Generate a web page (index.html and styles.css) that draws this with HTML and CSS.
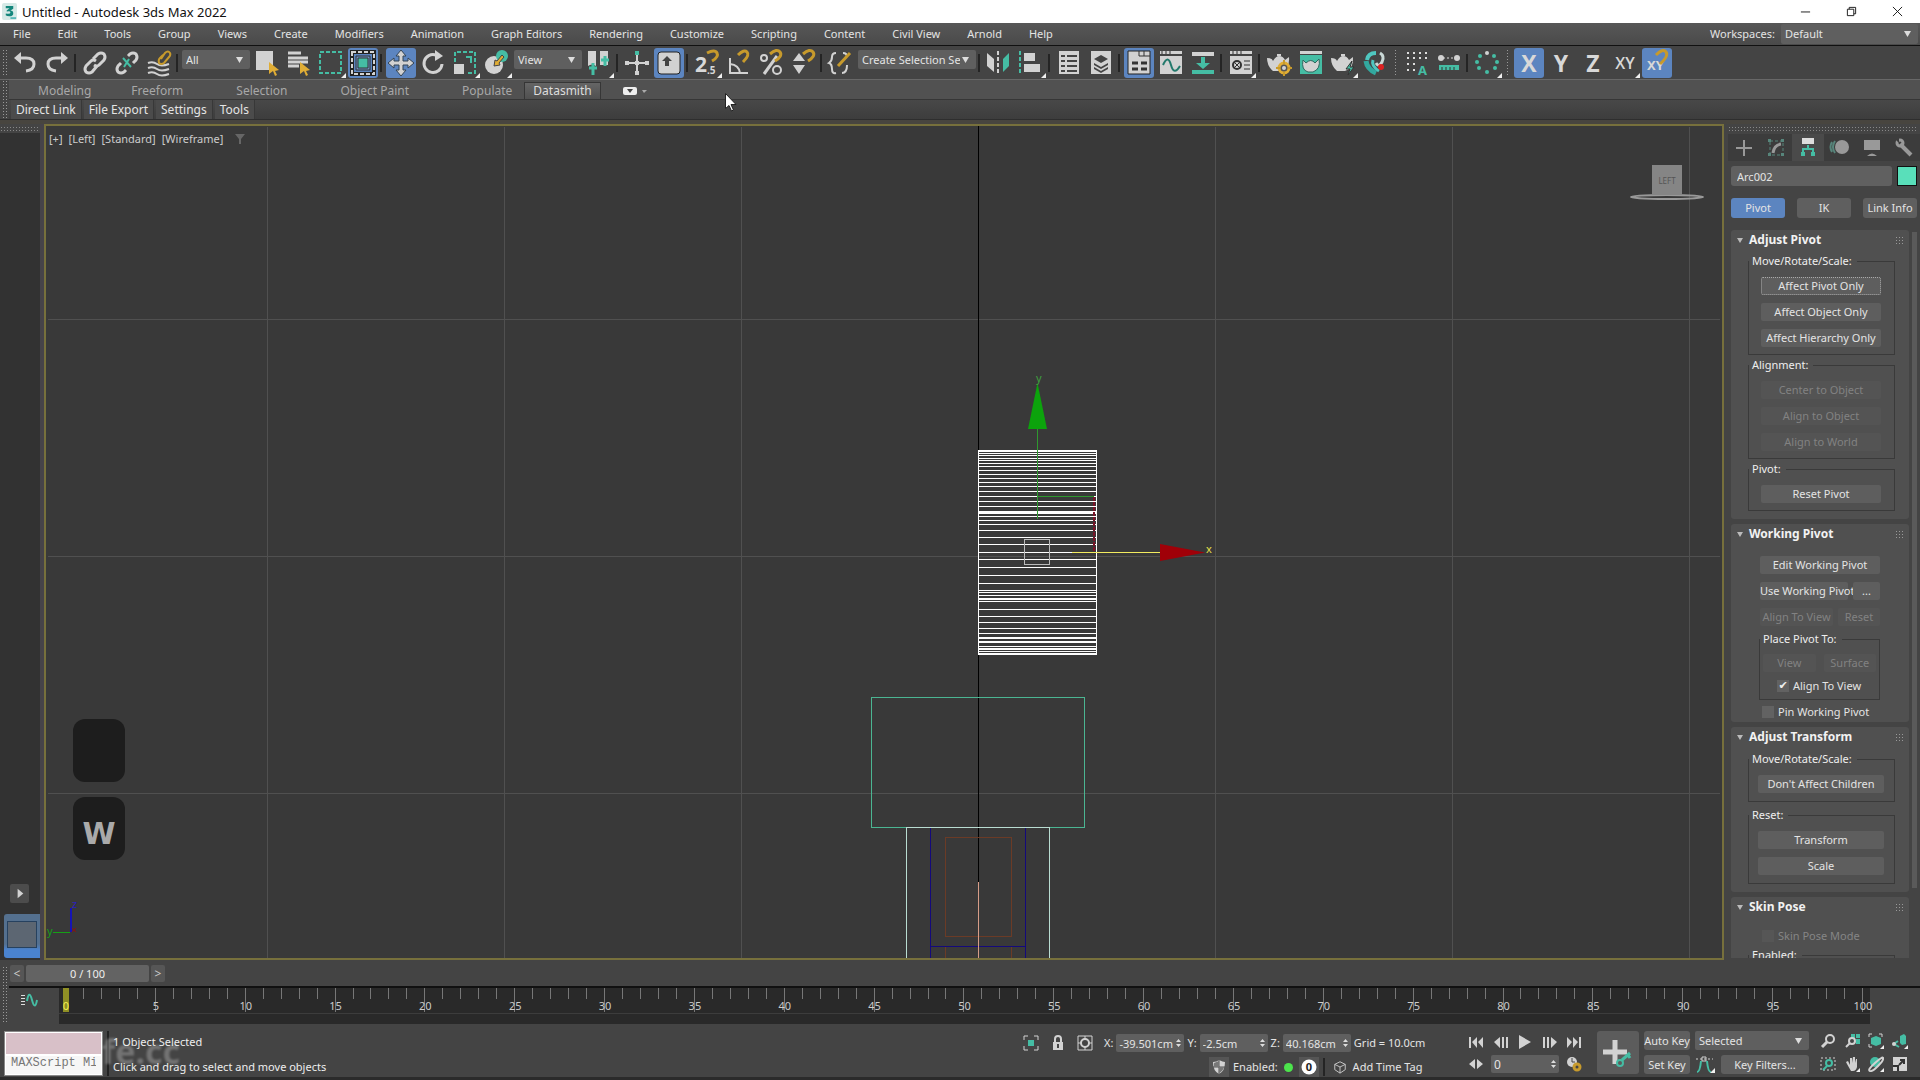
FILE: index.html
```html
<!DOCTYPE html>
<html lang="en">
<head>
<meta charset="utf-8">
<title>Untitled - Autodesk 3ds Max 2022</title>
<link rel="stylesheet" href="styles.css">
</head>
<body>
<div class="app">
  <header class="titlebar">
    <svg class="logo" viewBox="0 0 16 18"><rect width="16" height="18" rx="2" fill="#d5e9e6"/><path d="M4 3h8v3L9 8q3 0 3 3t-4 3q-3 0-4-1v-2q5 1 5-1t-4-1V8l3-2.500H4z" fill="#14867c"/><path d="M9 16h6" stroke="#3aa" stroke-width="1.500"/></svg>
    <h1>Untitled - Autodesk 3ds Max 2022</h1>
    <div class="winbtns">
      <button aria-label="Minimize"><svg viewBox="0 0 12 12"><path d="M1 6.500h10"/></svg></button>
      <button aria-label="Restore"><svg viewBox="0 0 12 12"><path d="M1.500 3.500h7v7h-7zM3.500 3.500v-2h7v7h-2"/></svg></button>
      <button aria-label="Close"><svg viewBox="0 0 12 12"><path d="M1 1l10 10M11 1L1 11"/></svg></button>
    </div>
  </header>

  <nav class="menubar">
    <a href="#">File</a><a href="#">Edit</a><a href="#">Tools</a><a href="#">Group</a><a href="#">Views</a><a href="#">Create</a><a href="#">Modifiers</a><a href="#">Animation</a><a href="#">Graph Editors</a><a href="#">Rendering</a><a href="#">Customize</a><a href="#">Scripting</a><a href="#">Content</a><a href="#">Civil View</a><a href="#">Arnold</a><a href="#">Help</a>
    <div class="workspaces"><label for="ws">Workspaces:</label><select id="ws" class="drop"><option>Default</option></select></div>
  </nav>

  <div class="toolbar">
    <i class="grip"></i>
    <button class="tool" aria-label="Undo"><svg viewBox="0 0 30 30"><path d="M9 10h7q8 0 8 6t-8 7" class="l w3"/><path d="M11 4v12L4 10z" class="f"/></svg></button>
    <button class="tool" aria-label="Redo"><svg viewBox="0 0 30 30"><path d="M21 10h-7q-8 0-8 6t8 7" class="l w3"/><path d="M19 4v12l7-6z" class="f"/></svg></button>
    <i class="sep"></i>
    <button class="tool" aria-label="Link"><svg viewBox="0 0 30 30"><g class="l w3"><path d="M13 11l5-5q3-2 6 0 2 3 0 6l-5 5q-2 2-5 0"/><path d="M17 18l-5 6q-3 2-6 0-2-3 0-6l5-5q2-2 5 0"/></g></svg></button>
    <button class="tool" aria-label="Unlink"><svg viewBox="0 0 30 30"><g class="l w3"><path d="M16 8l2-2q3-2 6 0 2 3 0 6l-3 3"/><path d="M14 22l-2 2q-3 2-6 0-2-3 0-6l3-3"/></g><path d="M11 10l8 9M17 11l-5 8" class="t w2"/></svg></button>
    <button class="tool" aria-label="Bind to Space Warp"><svg viewBox="0 0 30 30"><path d="M4 15q5-2 9 1t12 0M4 20q5-2 9 1t12 0M4 25q5-2 9 1t12 0" class="l w2"/><path d="M17 11l4-6q3-3 5 0 1 2-1 4l-5 6q-3 2-5 0-1-3 1-5l3-3" class="y w2"/></svg></button>
    <i class="sep"></i>
    <select class="drop tdrop" aria-label="Selection filter"><option>All</option></select>
    <button class="tool" aria-label="Select Object"><svg viewBox="0 0 30 30"><path d="M4 3h17v19H4z" class="f"/><path d="M17 14l10 8-4 1 2 4-2 1-2-5-4 3z" class="fy"/></svg></button>
    <button class="tool" aria-label="Select by Name"><svg viewBox="0 0 30 30"><path d="M4 5h13M4 10h20M4 14h20M4 18h11" class="l w3"/><path d="M16 14l10 8-4 1 2 4-2 1-2-5-4 3z" class="fy"/></svg></button>
    <button class="tool" aria-label="Rectangular Region"><svg viewBox="0 0 30 30"><path d="M4 4h21v21H4z" class="t w2" stroke-dasharray="4 2"/><path d="M30 25v5h-5z" class="fw"/></svg></button>
    <button class="tool on" aria-label="Window Crossing"><svg viewBox="0 0 30 30"><path d="M4 4h22v22H4z" fill="none" stroke="#222" stroke-width="4"/><path d="M4 4h22v22H4z" class="l w2" stroke-dasharray="4 2"/><path d="M8 8h14v14H8z" fill="#6d8fc0" stroke="#333" stroke-width="1"/><path d="M10 10h10v10H10z" class="ft" stroke="#333"/></svg></button>
    <i class="sep"></i>
    <button class="tool on" aria-label="Move"><svg viewBox="0 0 30 30"><path d="M15 2l5 6h-3v5h5v-3l6 5-6 5v-3h-5v5h3l-5 6-5-6h3v-5H8v3l-6-5 6-5v3h5V8h-3z" class="f" stroke="#345"/></svg></button>
    <button class="tool" aria-label="Rotate"><svg viewBox="0 0 30 30"><path d="M18 7a9 9 0 1 0 6 9" class="l w3"/><path d="M17 2v11l8-5z" class="f"/></svg></button>
    <button class="tool" aria-label="Scale"><svg viewBox="0 0 30 30"><path d="M5 14V4h20v21H16" class="t w2" stroke-dasharray="4 2"/><path d="M4 16h10v10H4z" class="f"/><path d="M16 9h5v6" class="t w2"/><path d="M30 25v5h-5z" class="fw"/></svg></button>
    <button class="tool" aria-label="Place"><svg viewBox="0 0 30 30"><circle cx="12" cy="17" r="9" class="f"/><circle cx="20" cy="8" r="6" class="ft"/><path d="M12 18l1-6 2 1 5-6 2 2-5 6 1 2z" class="fy" stroke="#444"/><path d="M30 25v5h-5z" class="fw"/></svg></button>
    <select class="drop tdrop" aria-label="Reference coordinate system"><option>View</option></select>
    <button class="tool" aria-label="Use Pivot Center"><svg viewBox="0 0 30 30"><path d="M4 3h8v15q-4-3-8 0zM16 3h8v14h-8z" class="f"/><path d="M9 15v12M5 20h8M21 8v10M17 12h8" class="t w3"/><path d="M30 25v5h-5z" class="fw"/></svg></button>
    <i class="sep"></i>
    <button class="tool" aria-label="Manipulate"><svg viewBox="0 0 30 30"><path d="M15 7v18M5 15h20" class="l w2"/><path d="M13 3h4v4h-4z" class="ft"/><path d="M3 13h4v4H3zM23 13h4v4h-4zM13 13h4v4h-4zM13 23h4v4h-4z" class="f"/></svg></button>
    <button class="tool on" aria-label="Keyboard Override"><svg viewBox="0 0 30 30"><rect x="4" y="4" width="22" height="22" rx="3" class="f" stroke="#222"/><path d="M13 8l5 5h-3v5h-4v-5H8z" fill="#444"/></svg></button>
    <i class="sep"></i>
    <button class="tool" aria-label="Snaps Toggle"><svg viewBox="0 0 30 30"><text x="3" y="24" class="tt big">2</text><text x="15" y="26" class="tt small">.5</text><path d="M15 5q8-4 10 0t-5 8" class="y w3"/><path d="M30 25v5h-5z" class="fw"/></svg></button>
    <button class="tool" aria-label="Angle Snap"><svg viewBox="0 0 30 30"><path d="M6 10v15h18M6 16q9 1 10 9" class="l w2"/><path d="M14 7q6-6 9-3t-4 10" class="y w3"/></svg></button>
    <button class="tool" aria-label="Percent Snap"><svg viewBox="0 0 30 30"><circle cx="8" cy="10" r="3" class="l w2"/><circle cx="21" cy="22" r="4" class="l w2"/><path d="M21 8L8 26" class="l w3"/><path d="M14 6q7-6 10-2t-5 9" class="y w3"/></svg></button>
    <button class="tool" aria-label="Spinner Snap"><svg viewBox="0 0 30 30"><path d="M5 13l6-8 6 8zM5 17h12l-6 9z" class="f"/><path d="M15 6q7-6 10-2t-5 9" class="y w3"/></svg></button>
    <i class="sep"></i>
    <button class="tool" aria-label="Named Selection Sets"><svg viewBox="0 0 30 30"><path d="M10 5q-4 0-4 4t-3 6q3 1 3 6t4 4M17 5q4 0 4 4M21 17q0 8-5 8" class="l w2"/><path d="M12 18L24 5" class="y w3"/></svg></button>
    <select class="drop sdrop" aria-label="Create Selection Set"><option>Create Selection Set</option></select>
    <i class="sep"></i>
    <button class="tool" aria-label="Mirror"><svg viewBox="0 0 30 30"><path d="M3 5l7 6v13l-7-6z" class="f"/><path d="M14 3v24" class="l w2" stroke-dasharray="4 2"/><path d="M25 5l-6 6v13l6-6z" class="ft"/></svg></button>
    <button class="tool" aria-label="Align"><svg viewBox="0 0 30 30"><path d="M4 3v24" class="t w2" stroke-dasharray="4 2"/><path d="M8 5h11v8H8zM8 16h16v8H8z" class="f"/><path d="M30 25v5h-5z" class="fw"/></svg></button>
    <i class="sep"></i>
    <button class="tool" aria-label="Scene Explorer"><svg viewBox="0 0 30 30"><path d="M5 3h20v23H5z" class="f"/><path d="M7 8h4m2 0h10M7 13h4m2 0h10M7 18h4m2 0h10M7 23h4m2 0h10" stroke="#444" stroke-width="2"/></svg></button>
    <button class="tool" aria-label="Layer Explorer"><svg viewBox="0 0 30 30"><path d="M5 3h20v23H5z" class="f"/><path d="M15 7l7 4-7 4-7-4zM8 15l7 4 7-4v2l-7 4-7-4zM8 19l7 4 7-4v2l-7 4-7-4z" fill="#444"/></svg></button>
    <i class="sep"></i>
    <button class="tool on" aria-label="Toggle Ribbon"><svg viewBox="0 0 30 30"><path d="M4 3h22v23H4z" class="f" stroke="#222"/><path d="M15 8h11M15 3v5M20 3v5" stroke="#333"/><path d="M8 15h6M17 15h6M8 21h6M17 21h6" stroke="#333" stroke-width="3"/></svg></button>
    <button class="tool" aria-label="Curve Editor"><svg viewBox="0 0 30 30"><path d="M4 3h22v3H4zM4 8h22v18H4z" class="f"/><path d="M6 3v3m4-3v3m4-3v3" stroke="#333"/><path d="M7 17q5-11 8 0t9 1" fill="none" stroke="#23796c" stroke-width="2"/></svg></button>
    <button class="tool" aria-label="Schematic View"><svg viewBox="0 0 30 30"><path d="M4 4h22v4H4z" class="f"/><path d="M13 9h4v6h5l-7 6-7-6h5zM4 22h22v4H4z" class="ft"/></svg></button>
    <i class="sep"></i>
    <button class="tool" aria-label="Material Editor"><svg viewBox="0 0 30 30"><path d="M4 3h22v3H4zM4 8h22v18H4z" class="f"/><circle cx="11" cy="17" r="4" fill="none" stroke="#333" stroke-width="2"/><path d="M8 14l6 6m0-6l-6 6M18 13h6M18 17h6M18 21h6M7 3v3m4-3v3m4-3v3" stroke="#333"/><path d="M30 25v5h-5z" class="fw"/></svg></button>
    <i class="sep"></i>
    <button class="tool" aria-label="Render Setup"><svg viewBox="0 0 30 30"><path d="M3 10q5 0 6 3 3-5 6-5 4 0 6 4l4-3q1 12-8 14H9Q3 18 3 10zM13 6h4v2h-4z" class="f"/><circle cx="20" cy="20" r="5" fill="#555" stroke="#e0ad35" stroke-width="3"/><path d="M20 12v4m0 8v4m-8-8h4m8 0h4" class="y w2"/><circle cx="20" cy="20" r="2" class="f"/></svg></button>
    <button class="tool" aria-label="Rendered Frame"><svg viewBox="0 0 30 30"><path d="M4 3h22v3H4z" class="f"/><path d="M4 7h22v19H4z" class="ft"/><path d="M7 12l3 3q5-5 9 0l4-4q2 10-6 13h-5q-7-2-5-12z" class="f" stroke="#30675f"/></svg></button>
    <button class="tool" aria-label="Render"><svg viewBox="0 0 30 30"><path d="M3 10q5 0 6 3 3-5 6-5 4 0 6 4l4-3q1 12-8 14H9Q3 18 3 10zM13 6h4v2h-4z" class="f"/><path d="M24 13l-6 8h4l-2 6 6-8h-4z" class="ft" stroke="#333"/><path d="M30 25v5h-5z" class="fw"/></svg></button>
    <button class="tool" aria-label="Arnold"><svg viewBox="0 0 30 30"><path d="M7 12q1-7 9-7" stroke="#4fc7c0" stroke-width="4" fill="none"/><path d="M6 13q1 8 10 12" stroke="#32a89f" stroke-width="5" fill="none"/><path d="M20 5q5 3 2 9t-6 1" stroke="#c9d8d6" stroke-width="3" fill="none"/><path d="M13 12q-2 6 6 11" stroke="#4fc7c0" stroke-width="3" fill="none"/><circle cx="21" cy="19" r="3" fill="#d22"/></svg></button>
    <i class="grip wide"></i>
    <button class="tool" aria-label="Grid Snap"><svg viewBox="0 0 30 30"><path d="M5 5h20M5 10h20M5 16h8M5 22h8" stroke="#ddd" stroke-width="2" stroke-dasharray="2 4"/><text x="16" y="27" class="tt teal">A</text></svg></button>
    <button class="tool" aria-label="Distance"><svg viewBox="0 0 30 30"><path d="M5 10h20" stroke="#ddd" stroke-width="1" stroke-dasharray="2 2"/><circle cx="7" cy="10" r="3" class="f"/><circle cx="23" cy="10" r="3" class="f"/><path d="M5 17h20v5H5z" class="ft"/><path d="M8 19v3m4-3v3m4-3v3m4-3v3" stroke="#333"/></svg></button>
    <i class="sep"></i>
    <button class="tool" aria-label="Array"><svg viewBox="0 0 30 30"><circle cx="15" cy="5" r="2" class="f"/><g class="ft"><circle cx="8" cy="8" r="2"/><circle cx="22" cy="8" r="2"/><circle cx="5" cy="14" r="2"/><circle cx="25" cy="14" r="2"/><circle cx="7" cy="20" r="2"/><circle cx="23" cy="20" r="2"/><circle cx="15" cy="24" r="2"/></g><path d="M30 25v5h-5z" class="fw"/></svg></button>
    <i class="grip wide"></i>
    <button class="tool on axis">X</button>
    <button class="tool axis">Y</button>
    <button class="tool axis">Z</button>
    <button class="tool axis two">XY<svg class="corner" viewBox="0 0 5 5"><path d="M5 0v5H0z" class="fw"/></svg></button>
    <button class="tool on" aria-label="Snaps use axis constraints"><svg viewBox="0 0 30 30"><text x="5" y="22" class="tt xy">XY</text><path d="M14 7q7-7 10-3t-6 12" class="y w3"/></svg></button>
  </div>

  <div class="ribbon">
    <i class="grip tall"></i>
    <div class="ribbon-main">
      <div class="tabs">
        <button class="near">Modeling</button><button>Freeform</button><button>Selection</button><button>Object Paint</button><button class="last">Populate</button><button class="active">Datasmith</button>
        <button class="mini" aria-label="Minimize ribbon"><svg viewBox="0 0 24 8"><rect width="14" height="8" rx="2" fill="#eee"/><path d="M4 2h6l-3 4z" fill="#444"/><path d="M19 3h5l-3 3z" fill="#aaa"/></svg></button>
      </div>
      <div class="panelrow"><button>Direct Link</button><button>File Export</button><button>Settings</button><button>Tools</button></div>
    </div>
  </div>

  <main class="work">
    <aside class="leftbar">
      <i class="hgrip"></i>
      <div class="leftfill">
        <button class="expand" aria-label="Expand"><svg viewBox="0 0 20 20"><path d="M8 5l6 5-6 5z" class="f"/></svg></button>
        <button class="layout" aria-label="Viewport layout"><span></span></button>
      </div>
    </aside>

    <section class="viewport">
      <svg class="scene" viewBox="46 126 1676 832" preserveAspectRatio="xMidYMid slice" shape-rendering="crispEdges">
        <g stroke="#505050"><path d="M267.500 127v831M504.500 127v831M741.500 127v831M1215.500 127v831M1452.500 127v831M1689.500 127v831M48 319.500h1672M48 556.500h1672M48 793.500h1672"/></g>
        <path d="M978.500 126v756" stroke="#000"/>
        <g fill="none">
          <path d="M945.500 958v-11M1011.500 958v-11M945.500 837.500h66v99h-66z" stroke="#6b3b26"/>
          <path d="M930.500 958V827M1025.500 958V827M930 946.500h95" stroke="#14097c"/>
          <path d="M871.500 697.500h213v130h-213z" stroke="#4bb592"/>
          <path d="M906.500 958V827.500h143V958" stroke="#b9ddd2"/>
          <path d="M978.500 882v76" stroke="#d79d88"/>
        </g>
        <g fill="none" stroke="#fff">
          <path d="M978.500 450.500h118v204h-118z"/>
          <path d="M979 451.500h117M979 453.500h117M979 455.500h117M979 458.500h117M979 460.500h117M979 463.500h117M979 466.500h117M979 470.500h117M979 474.500h117M979 478.500h117M979 482.500h117M979 486.500h117M979 491.500h117M979 496.500h117M979 501.500h117M979 506.500h117M979 516.500h117M979 520.500h117M979 524.500h117M979 530.500h117M979 537.500h117M979 544.500h117M979 552.500h117M979 559.500h117M979 567.500h117M979 575.500h117M979 583.500h117M979 590.500h117M979 592.500h117M979 595.500h117M979 601.500h117M979 609.500h117M979 616.500h117M979 622.500h117M979 628.500h117M979 633.500h117M979 646.500h117M979 651.500h117M979 653.500h117"/>
          <path d="M979 512h117M979 599h117M979 638h117M979 642h117M979 649h117" stroke-width="2"/><path d="M979 511h117v2h-117z" fill="#fff"/>
        </g>
        <path d="M1037.500 429v90M1037 496.500h57" stroke="#2f982f"/>
        <path d="M1093.500 497v54" stroke="#7a1428" stroke-width="2" stroke-dasharray="4 1"/>
        <path d="M1024.500 539.500h25v25h-25z" fill="none" stroke="#bbb"/>
        <path d="M1072 552.500h88" stroke="#f3ec5f"/>
        <g shape-rendering="auto"><path d="M1037.500 383l9.500 46h-19z" fill="#0ca30c"/><path d="M1160 544l45 8.500-45 8.500z" fill="#a00008"/>
        <ellipse cx="1667" cy="197" rx="36" ry="2" fill="none" stroke="#999" stroke-width="2"/><path d="M1652 165h30v30h-30z" fill="#858585"/></g>
        <text x="1667" y="184" class="cube">LEFT</text>
        <text x="1036" y="382" class="ax" fill="#3fa03f">y</text><text x="1206" y="553" class="ax" fill="#e8e04a">x</text>
        <path d="M70.500 932V908" stroke="#1513b5" stroke-width="2"/><path d="M53 932.500h17" stroke="#16a016"/><path d="M72 928l4 4m0-4l-4 4" stroke="#8c1010"/>
        <text x="72" y="908" class="ax" fill="#2a1fc0">z</text><text x="47" y="935" class="ax" fill="#16a016">y</text>
      </svg>
      <div class="vlabel"><span>[+]</span><span>[Left]</span><span>[Standard]</span><span>[Wireframe]</span><svg viewBox="0 0 10 10"><path d="M0 0h10L6 5v5H4V5z" fill="#666"/></svg></div>
      <div class="keys"><kbd></kbd><kbd>W</kbd></div>
    </section>

    <aside class="command">
      <i class="hgrip"></i>
      <div class="ptabs">
        <button aria-label="Create"><svg viewBox="0 0 32 27"><path d="M16 6v16M8 14h16" stroke="#999" stroke-width="2"/></svg></button>
        <button aria-label="Modify"><svg viewBox="0 0 32 27"><path d="M10 7h13v14H10z" fill="none" stroke="#57857b" stroke-dasharray="3 2"/><path d="M8 5h3v3H8zM21 5h3v3h-3zM8 19h3v3H8zM21 19h3v3h-3z" fill="#57857b"/><path d="M13 19q1-8 8-9" stroke="#999" stroke-width="3" fill="none"/></svg></button>
        <button class="active" aria-label="Hierarchy"><svg viewBox="0 0 32 27"><path d="M10 4h12v6H10z" fill="#ddd"/><path d="M16 11v4M11 19v-4h10v4" class="t w2"/><path d="M9 18h4v4H9zM19 18h4v4h-4z" class="ft"/></svg></button>
        <button aria-label="Motion"><svg viewBox="0 0 32 27"><circle cx="18" cy="13" r="7" fill="#999"/><path d="M11 7q-4 6 0 12M8 8q-3 5 0 10" stroke="#57857b" stroke-width="2" fill="none"/></svg></button>
        <button aria-label="Display"><svg viewBox="0 0 32 27"><path d="M8 6h16v10H8zM11 22q5-5 10 0z" fill="#999"/></svg></button>
        <button aria-label="Utilities"><svg viewBox="0 0 32 27"><path d="M12 10l11 11" stroke="#999" stroke-width="4"/><circle cx="12" cy="9" r="3" fill="none" stroke="#999" stroke-width="3"/><path d="M6 4h5v5z" fill="#3c3c3c"/></svg></button>
      </div>
      <div class="namerow"><input aria-label="Object name" value="Arc002"><button class="swatch" aria-label="Object color"></button></div>
      <div class="modes"><button class="on">Pivot</button><button>IK</button><button>Link Info</button></div>
      <div class="scroll">
        <div class="rollouts">
          <section class="rollout">
            <h2>Adjust Pivot</h2>
            <fieldset><legend>Move/Rotate/Scale:</legend><button class="focus">Affect Pivot Only</button><button>Affect Object Only</button><button>Affect Hierarchy Only</button></fieldset>
            <fieldset><legend>Alignment:</legend><button disabled>Center to Object</button><button disabled>Align to Object</button><button disabled>Align to World</button></fieldset>
            <fieldset><legend>Pivot:</legend><button>Reset Pivot</button></fieldset>
          </section>
          <section class="rollout">
            <h2>Working Pivot</h2>
            <div class="stack">
              <button>Edit Working Pivot</button>
              <div class="pair a"><button>Use Working Pivot</button><button>...</button></div>
              <div class="pair b"><button disabled>Align To View</button><button disabled>Reset</button></div>
            </div>
            <fieldset class="inner"><legend>Place Pivot To:</legend>
              <div class="pair c"><button disabled>View</button><button disabled>Surface</button></div>
              <label class="check"><input type="checkbox" checked>Align To View</label>
            </fieldset>
            <label class="check pin"><input type="checkbox">Pin Working Pivot</label>
          </section>
          <section class="rollout roomy">
            <h2>Adjust Transform</h2>
            <fieldset><legend>Move/Rotate/Scale:</legend><button>Don't Affect Children</button></fieldset>
            <fieldset><legend>Reset:</legend><button>Transform</button><button>Scale</button></fieldset>
          </section>
          <section class="rollout">
            <h2>Skin Pose</h2>
            <label class="check skin"><input type="checkbox" disabled>Skin Pose Mode</label>
            <fieldset><legend>Enabled:</legend></fieldset>
          </section>
        </div>
        <i class="bar"></i>
      </div>
    </aside>
  </main>

  <footer class="bottom">
    <div class="time">
      <i class="grip tall"></i>
      <div class="time-main">
        <div class="slider"><button>&lt;</button><button class="frame">0 / 100</button><button>&gt;</button></div>
        <div class="trackrow">
          <button class="curve" aria-label="Mini Curve Editor"><svg viewBox="0 0 18 14"><path d="M2 2v11" stroke="#ddd" stroke-width="4" stroke-dasharray="1 2"/><path d="M6 8q2-12 5-1t5 0" class="t w2"/></svg></button>
          <div class="track"><div class="ticks" id="ticks"></div></div>
        </div>
      </div>
    </div>
    <div class="status">
      <div class="listener"><input class="pink" aria-label="Macro recorder"><input aria-label="MAXScript Mini Listener" value="MAXScript Mini Listener"></div>
      <div class="msgs"><p>1 Object Selected</p><p>Click and drag to select and move objects</p><span class="mark">fe.cc</span></div>
      <div class="coords">
        <div class="crow">
          <svg class="ic" viewBox="0 0 16 16"><path d="M1 5V1h4M11 1h4v4M15 11v4h-4M5 15H1v-4" class="l"/><path d="M5 5h6v6H5z" class="ft"/></svg>
          <svg class="ic" viewBox="0 0 16 16"><path d="M3 7h10v8H3z" class="f"/><path d="M5 7V4q0-3 3-3t3 3v3" class="l w2"/><path d="M8 9v4" stroke="#444" stroke-width="2"/></svg>
          <svg class="ic" viewBox="0 0 16 16"><path d="M1 1h14v14H1z" class="l"/><circle cx="8" cy="8" r="4" class="l w2"/><path d="M8 1v4m0 6v4M1 8h4m6 0h4" class="l"/></svg>
          <label>X:<input class="num" value="-39.501cm"></label><label>Y:<input class="num" value="-2.5cm"></label><label>Z:<input class="num" value="40.168cm"></label>
          <span>Grid = 10.0cm</span>
        </div>
        <div class="crow two">
          <button class="chip" aria-label="Security"><svg viewBox="0 0 16 16"><path d="M8 1q4 2 6 2 0 9-6 12Q2 12 2 3q4 0 6-2z" class="f"/><path d="M8 1v14M2 8h12" stroke="#555"/><path d="M8 2v6H3V4zM8 8h5q-1 4-5 6z" fill="#777"/></svg></button>
          <span>Enabled:</span><i class="dot"></i>
          <button class="chip" aria-label="Notifications"><svg viewBox="0 0 16 16"><circle cx="8" cy="8" r="7.500" fill="#fff"/><text x="8" y="12" class="zero">0</text></svg></button>
          <i class="sep"></i>
          <svg class="ic cubeic" viewBox="0 0 16 16"><path d="M8 2l6 3v6l-6 4-6-4V5zM2 5l6 3 6-3M8 8v7" class="l"/></svg>
          <a href="#">Add Time Tag</a>
        </div>
      </div>
      <div class="play">
        <div class="prow"><button aria-label="Start"><svg viewBox="0 0 16 16"><path d="M1 3h2v11H1zM9 3v11L4 8zM15 3v11l-5-6z" class="f"/></svg></button><button aria-label="Previous"><svg viewBox="0 0 16 16"><path d="M7 3v11L1 8zM9 3h2v11H9zM13 3h2v11h-2z" class="f"/></svg></button><button aria-label="Play"><svg viewBox="0 0 16 16"><path d="M2 1l12 7-12 7z" class="f"/></svg></button><button aria-label="Next"><svg viewBox="0 0 16 16"><path d="M1 3h2v11H1zM5 3h2v11H5zM9 3v11l6-6z" class="f"/></svg></button><button aria-label="End"><svg viewBox="0 0 16 16"><path d="M1 3v11l5-6zM7 3v11l5-6zM13 3h2v11h-2z" class="f"/></svg></button></div>
        <div class="prow"><button aria-label="Key mode"><svg viewBox="0 0 16 16"><path d="M7 3v10L1 8zM9 3v10l6-5z" class="f"/></svg></button><input class="num frameno" aria-label="Current frame" value="0"><button aria-label="Time configuration"><svg viewBox="0 0 16 16"><circle cx="6" cy="6" r="5" class="f"/><path d="M6 2v4h3" stroke="#444" fill="none"/><circle cx="11" cy="11" r="3" class="y w3"/></svg></button></div>
      </div>
      <button class="setbig" aria-label="Set Keys"><svg viewBox="0 0 42 42"><path d="M18 8v24M6 20h24" stroke="#d2d2d2" stroke-width="5"/><circle cx="23" cy="31" r="3" class="t w2"/><path d="M25 28l8-7m-2 2l2 3" class="t w3"/></svg></button>
      <div class="keyset"><button>Auto Key</button><button>Set Key</button></div>
      <div class="keyset wide">
        <select class="drop" aria-label="Key selection"><option>Selected</option></select>
        <div class="kf"><svg class="kic" viewBox="0 0 20 18"><path d="M2 17q3 0 4-11M16 17q-3 0-4-11" class="t w2"/><path d="M1 4h17" class="l" stroke-dasharray="2 2"/><path d="M7 2h4v4H7z" class="l"/><path d="M20 13v5h-5z" class="fw"/></svg><button>Key Filters...</button></div>
      </div>
      <div class="nav">
        <button aria-label="Zoom"><svg viewBox="0 0 16 16"><circle cx="10" cy="6" r="4" class="l w2"/><path d="M7 9l-5 5" class="l w3"/></svg></button>
        <button aria-label="Zoom All"><svg viewBox="0 0 16 16"><path d="M7 1h4v4H7zM12 1h4v4h-4zM12 6h4v5h-4z" class="ft"/><circle cx="8" cy="8" r="3" class="l w2"/><path d="M6 10l-4 4" class="l w2"/></svg></button>
        <button aria-label="Zoom Extents"><svg viewBox="0 0 16 16"><path d="M1 4V1h3M11 1h3v3M1 11v3h3" class="l"/><path d="M8 3l5 2v6l-5 2-5-2V5z" class="ft"/><path d="M16 12v4h-4z" class="fw"/></svg></button>
        <button aria-label="Field of View"><svg viewBox="0 0 16 16"><path d="M8 3l4-2 2 2v8l-4 1-2-2z" class="ft"/><path d="M6 8l-4 3 5 3" class="t w2"/><circle cx="2" cy="11" r="2" class="f"/><path d="M16 12v4h-4z" class="fw"/></svg></button>
        <button aria-label="Zoom Region"><svg viewBox="0 0 16 16"><path d="M1 2h14v12H1z" class="l" stroke-dasharray="2 2"/><circle cx="9" cy="7" r="3" class="t w2"/><path d="M7 10l-4 4" class="t w2"/></svg></button>
        <button aria-label="Pan"><svg viewBox="0 0 16 16"><path d="M3 8l-1-2 2-1 2 4V2h2v5l1-6h2v6l1-4h1v8q-1 4-4 4H7z" class="f"/><path d="M16 12v4h-4z" class="fw"/></svg></button>
        <button aria-label="Orbit"><svg viewBox="0 0 16 16"><circle cx="7" cy="6" r="5" class="ft"/><path d="M2 15q-3-1 5-8t8-5q1 2-5 8t-8 5" class="l w2"/><path d="M16 12v4h-4z" class="fw"/></svg></button>
        <button aria-label="Maximize Viewport"><svg viewBox="0 0 16 16"><path d="M1 1h14v14H1z" class="f"/><path d="M8 4h4v4M12 4L7 9M1 10h5v5" fill="none" stroke="#333" stroke-width="2"/></svg></button>
      </div>
    </div>
  </footer>
  <svg class="cursor" viewBox="0 0 12 19"><path d="M.500.500v15l3.500-3 2.500 5.500 2-1-2.500-5.500h5z" fill="#fff" stroke="#222"/></svg>
</div>
<script>
const ticks = document.getElementById('ticks');
for (let f = 0; f <= 100; f++) {
  const t = document.createElement('span');
  if (f % 5 === 0) {
    t.className = 'major';
    const b = document.createElement('b');
    b.textContent = f;
    t.append(b);
  }
  if (f === 0) t.classList.add('now');
  ticks.append(t);
}
</script>
</body>
</html>
```
FILE: styles.css
```css
:root {
  --bg: #444;
  --btn: #5f5f5f;
  --text: #e4e4e4;
  --teal: #45bda4;
  --blue: #5c85c0;
}
* { box-sizing: border-box; }
body { margin: 0; background: var(--bg); color: var(--text); font: 12px/16px "Noto Sans", "Open Sans", sans-serif; }
button, input, select { font: inherit; color: inherit; border: 0; padding: 0; margin: 0; background: none; border-radius: 0; min-width: 0; }
button { white-space: nowrap; }
a { color: inherit; text-decoration: none; }
svg { display: block; }
h1, h2, p { margin: 0; font-size: inherit; font-weight: normal; }
.f { fill: #d2d2d2; } .ft { fill: var(--teal); } .fy { fill: #e0ad35; } .fw { fill: #f0f0f0; }
.l { fill: none; stroke: #d2d2d2; } .t { fill: none; stroke: var(--teal); } .y { fill: none; stroke: #c79a2c; }
.w2 { stroke-width: 2; } .w3 { stroke-width: 3; }
.app { position: relative; display: flex; flex-direction: column; height: 100vh; overflow: hidden; }

.titlebar { display: flex; align-items: center; height: 23px; padding-left: 2px; background: #fff; color: #111; }
.titlebar h1 { font-size: 13px; }
.logo { width: 15px; height: 17px; margin-right: 5px; }
.winbtns { display: flex; margin-left: auto; }
.winbtns button { width: 46px; height: 22px; display: grid; place-items: center; }
.winbtns svg { width: 11px; height: 11px; fill: none; stroke: #111; }

.menubar { display: flex; align-items: center; gap: 27px; height: 23px; padding: 0 2px 0 13px; font-size: 11px; background: linear-gradient(#575757, #4a4a4a); border-bottom: 1px solid #111; }
.workspaces { display: flex; align-items: center; gap: 6px; margin-left: auto; }
.workspaces select { width: 137px; height: 20px; }
.drop { appearance: none; border-radius: 2px; padding: 0 16px 0 4px; background: #5f5f5f url("data:image/svg+xml,%3Csvg xmlns='http://www.w3.org/2000/svg' width='7' height='6'%3E%3Cpath d='M0 0h7L3.5 6z' fill='%23ddd'/%3E%3C/svg%3E") no-repeat right 7px center / 7px 6px; }

.toolbar { display: flex; align-items: center; gap: 2px; height: 33px; padding-left: 2px; background: #444; }
.grip { flex: none; width: 6px; height: 28px; background: radial-gradient(circle, #999 0 1px, transparent 1px) 0 0 / 3px 3px; }
.grip.wide { width: 4px; margin: 0 2px; }
.tool { position: relative; flex: none; width: 30px; height: 30px; border-radius: 3px; }
.tool > svg { width: 30px; height: 30px; }
.on { background: var(--blue); }
.sep { flex: none; width: 4px; height: 18px; border-left: 2px solid #242424; }
.tdrop, .sdrop { width: 68px; height: 19px; font-size: 11px; margin-bottom: 6px; }
.sdrop { width: 118px; }
.tt { fill: #d8d8d8; font-weight: bold; }
.tt.big { font-size: 21px; } .tt.small { font-size: 10px; } .tt.teal { fill: var(--teal); font-size: 13px; } .tt.xy { font-size: 13px; font-weight: bold; }
.axis { font: bold 23px/30px "Open Sans", sans-serif; color: #d8d8d8; }
.axis.two { font-size: 16px; font-weight: 600; }
.toolbar .corner { position: absolute; right: 0; bottom: 0; width: 5px; height: 5px; }

.ribbon { display: flex; height: 45px; padding-left: 2px; border-top: 1px solid #686868; background: linear-gradient(#444 0 39px, #2e2e2e 39px 40px, #48453f 40px); }
.grip.tall { height: 38px; margin-right: 1px; }
.ribbon-main { flex: 1; }
.tabs { display: flex; align-items: stretch; height: 20px; padding: 2px 0 0 29px; color: #a8a8a8; background: #515151; border-bottom: 1px solid #363636; }
.tabs button { margin-right: 53px; } .tabs .near { margin-right: 40px; } .tabs .last { margin-right: 12px; }
.tabs .active { margin: 0 22px 0 0; padding: 0 8px; color: #ddd; background: linear-gradient(#656565, #505050); border: 1px solid #363636; border-bottom: 0; }
.tabs .mini svg { width: 24px; height: 8px; }
.panelrow { display: flex; gap: 2px; height: 19px; background: linear-gradient(#484848, #3d3d3d); padding-left: 2px; }
.panelrow button { padding: 0 5px; background: #4b4b4b; border-right: 1px solid #383838; }

.work { flex: 1; min-height: 0; display: flex; }
.leftbar { width: 44px; padding-top: 2px; display: flex; flex-direction: column; border-right: 4px solid #464349; }
.hgrip { flex: none; height: 5px; background: radial-gradient(circle, #888 0 1px, transparent 1px) 0 0 / 3px 3px; }
.leftfill { flex: 1; margin-top: 2px; background: #323232; display: flex; flex-direction: column; justify-content: flex-end; gap: 11px; padding-bottom: 2px; }
.expand { width: 19px; height: 19px; margin-left: 10px; background: #4c4c4c; border-radius: 2px; }
.layout { margin-left: 4px; height: 44px; padding: 7px 3px 10px; background: linear-gradient(#54708f 0 30px, #4a83cf 36px); border-radius: 3px 0 0 3px; }
.layout span { display: block; height: 100%; border: 1px solid #26415f; background: #5c6672; }

.viewport { position: relative; flex: 1; min-width: 0; border: 2px solid #77703c; background: #393939; }
.scene { width: 100%; height: 100%; }
.cube { font: 8px "Noto Sans", sans-serif; text-anchor: middle; fill: #555; }
.ax { font: 11px "Noto Sans", sans-serif; }
.vlabel { position: absolute; left: 3px; top: 5px; display: flex; align-items: center; gap: 6px; font-size: 11px; color: #ccc; }
.vlabel svg { width: 10px; height: 10px; margin-left: 6px; }
.keys { position: absolute; left: 27px; bottom: 98px; display: grid; gap: 15px; }
kbd { display: grid; place-items: center; width: 52px; height: 63px; border-radius: 12px; background: #1d1d1d; color: #aaa; font: bold 30px "DejaVu Sans", sans-serif; padding-top: 10px; }

.command { width: 196px; padding: 2px 3px 2px 4px; display: flex; flex-direction: column; font-size: 11px; }
.ptabs { display: flex; height: 27px; margin: 3px -3px 0 0; background: #3c3c3c; }
.ptabs button { width: 32px; } .ptabs .active { background: #4a4a4a; }
.ptabs svg { width: 32px; height: 27px; }
.namerow { display: flex; gap: 5px; margin: 5px 0 12px 3px; }
.namerow input { flex: 1; height: 20px; padding-left: 6px; background: #606060; border-radius: 3px; }
.swatch { width: 20px; height: 20px; background: #59dfba; border: 1px solid #111; }
.modes { display: flex; justify-content: space-between; margin: 0 0 12px 3px; }
.modes button { width: 54px; height: 20px; background: var(--btn); border-radius: 3px; }
.modes .on { background: var(--blue); }
.scroll { flex: 1; min-height: 0; display: flex; overflow: hidden; margin-left: 3px; }
.rollouts { width: 178px; display: flex; flex-direction: column; gap: 5px; }
.rollout { flex: none; padding: 0 14px 8px 17px; background: #505050; border-radius: 3px; display: flex; flex-direction: column; gap: 2px; }
.rollout h2 { height: 22px; line-height: 20px; margin: 0 -8px -1px -11px; padding-bottom: 2px; display: flex; align-items: center; gap: 6px; font-size: 12px; font-weight: bold; color: #f2f2f2; }
.rollout h2::before { content: ""; border: 3px solid transparent; border-top: 5px solid #bbb; border-bottom: 0; }
.rollout h2::after { content: ""; margin-left: auto; width: 8px; height: 8px; background: radial-gradient(circle, #999 0 1px, transparent 1px) 0 0 / 3px 3px; }
fieldset { min-width: 0; margin: 0; border: 1px solid #3a3a3a; padding: 8px 13px 7px 12px; display: flex; flex-direction: column; gap: 8px; }
legend { padding: 0 5px 0 3px; margin-left: -12px; line-height: 16px; color: #eee; }
.rollout button { height: 18px; background: #5e5e5e; border-radius: 2px; }
.rollout button:disabled { background: #545454; color: #828282; }
.rollout .focus { outline: 1px dotted #aaa; outline-offset: -1px; }
.stack { display: flex; flex-direction: column; gap: 8px; margin: 9px 15px 3px 12px; }
.pair { display: grid; gap: 5px; } .pair.a { grid-template-columns: 1fr 27px; } .pair.b { grid-template-columns: 1fr 42px; } .pair.c { grid-template-columns: 1fr 1fr; gap: 8px; }
.inner { margin: 0 15px 0 11px; padding: 7px 3px; }
.inner legend { margin-left: -3px; }
.check { display: flex; align-items: center; gap: 4px; height: 12px; }
.inner .check { margin-left: 14px; }
.check input { appearance: none; width: 12px; height: 12px; background: #626262; }
.check input:checked::after { content: "✔"; display: block; font: 11px/12px "DejaVu Sans", sans-serif; text-align: center; color: #eee; }
.pin { margin: 4px 0 -4px 14px; }
.roomy { gap: 5px; } .roomy h2 { margin-bottom: -3px; }
.roomy fieldset { padding: 8px 10px 8px 9px; } .roomy legend { margin-left: -9px; }
.skin { margin: 10px 0 3px 14px; color: #858585; } .skin input { background: #565656; }
.bar { width: 5px; height: 656px; margin: 2px 0 0 auto; background: #5a5a5a; }

.bottom { height: 120px; display: flex; flex-direction: column; }
.time { display: flex; padding-left: 2px; height: 64px; }
.time .grip.tall { height: 56px; margin-top: 6px; }
.time-main { flex: 1; }
.slider { display: flex; gap: 2px; height: 26px; padding: 5px 0 4px 1px; color: #ccc; }
.slider button { width: 14px; background: #565656; border-radius: 2px; line-height: 16px; }
.slider .frame { width: 123px; background: #636363; color: #eee; font-size: 11px; }
.trackrow { display: flex; border-top: 2px solid #111; height: 38px; }
.curve { width: 50px; } .curve svg { width: 18px; height: 14px; margin: 0 0 12px 12px; }
.track { flex: 1; height: 36px; margin-right: 50px; padding: 0 7px 0 6px; background: #292929 linear-gradient(#3c3c3c, #3c3c3c) no-repeat 0 25px / 100% 1px; }
.ticks { display: flex; justify-content: space-between; }
.ticks span { width: 0; height: 11px; border-left: 1px solid #777; margin-right: -1px; }
.ticks .major { height: 24px; display: flex; justify-content: center; align-items: flex-end; }
.ticks b { font-weight: normal; font-size: 11px; color: #ccc; line-height: 13px; }
.ticks .now b { background: #8f8f25; line-height: 12px; padding-top: 12px; color: #f2ee50; }

.status { display: flex; height: 56px; padding: 7px 12px 0 4px; border-bottom: 3px solid #2b2b2b; }
.listener { width: 99px; height: 45px; display: grid; grid-template-rows: 21px 1fr; gap: 2px; padding: 1px; background: #fff; border: 1px solid #888; }
.listener input { width: 100%; padding: 0 5px 4px; font: 12px "Liberation Mono", monospace; color: #777; background: #f6f6f6; }
.listener .pink { background: #d8c0c8; }
.msgs { position: relative; margin-left: 4px; padding-left: 4px; border-left: 2px solid #222; height: 45px; color: #eee; font-size: 11px; }
.msgs p { margin: 3px 0 9px; }
.mark { position: absolute; left: -7px; top: 0; font: bold 34px/40px "Noto Sans", sans-serif; color: #fff; opacity: .25; filter: blur(1px); }
.coords { margin-left: auto; width: 440px; margin-right: 17px; }
.crow { display: flex; align-items: center; height: 24px; padding-left: 12px; gap: 3px; font-size: 11px; }
.crow.two { padding-left: 198px; gap: 4px; }
.crow label { display: flex; align-items: center; gap: 3px; }
.ic { width: 16px; height: 16px; flex: none; margin-right: 8px; }
.num { width: 68px; height: 18px; padding-left: 3px; border-radius: 2px; background: #5f5f5f url("data:image/svg+xml,%3Csvg xmlns='http://www.w3.org/2000/svg' width='5' height='10'%3E%3Cpath d='M0 4h5L2.5 1zM0 6h5L2.5 9z' fill='%23ddd'/%3E%3C/svg%3E") no-repeat right 3px center; }
.chip { width: 20px; height: 20px; background: #555; display: grid; place-items: center; } .chip svg { width: 16px; height: 16px; }
.zero { font: bold 11px "Noto Sans", sans-serif; text-anchor: middle; fill: #222; }
.dot { width: 9px; height: 9px; margin: 0 2px; border-radius: 50%; background: #4ce44c; }
.cubeic { margin: 0 2px; width: 14px; }
.play { width: 114px; margin-right: 15px; }
.prow { display: flex; align-items: center; height: 22px; justify-content: space-between; }
.prow button { width: 16px; } .prow svg { width: 16px; height: 16px; }
.setbig { width: 42px; height: 43px; background: #5c5c5c; border-radius: 3px; }
.keyset { width: 46px; margin-left: 5px; display: grid; grid-template-rows: 19px 19px; row-gap: 5px; }
.keyset button { background: var(--btn); border-radius: 3px; font-size: 11px; }
.keyset.wide { width: 114px; font-size: 11px; }
.kf { display: flex; gap: 6px; } .kf button { flex: 1; } .kic { width: 20px; height: 18px; }
.nav { display: grid; grid-template-columns: repeat(4, 16px); grid-template-rows: 19px 19px; gap: 4px 8px; margin-left: 11px; }
.nav svg { width: 16px; height: 16px; }
.cursor { position: absolute; left: 725px; top: 93px; width: 12px; height: 19px; }
```
